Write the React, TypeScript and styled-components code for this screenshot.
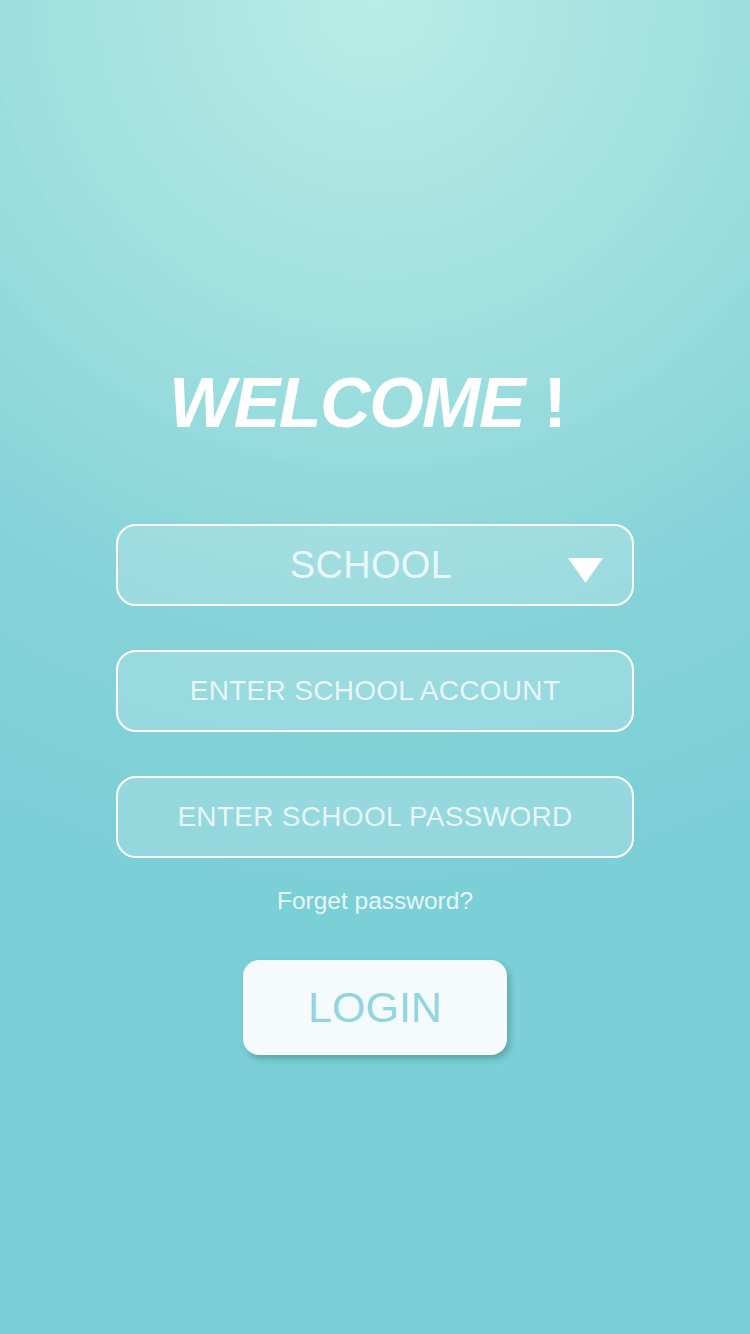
import React from 'react';
import styled, { createGlobalStyle } from 'styled-components';

const GlobalStyle = createGlobalStyle`
  html, body {
    margin: 0;
    padding: 0;
  }
  body {
    font-family: "Liberation Sans", Arial, sans-serif;
  }
`;

const Page = styled.div`
  min-height: 1334px;
  width: 750px;
  display: flex;
  flex-direction: column;
  align-items: center;
  background: radial-gradient(ellipse 900px 900px at 375px 0px, #b8ede6 0%, #9fdfdf 40%, #86d3d9 70%, #7bcfd6 100%);
  background-color: #7bcfd6;
`;

const Title = styled.h1`
  margin: 368px 0 0;
  height: 70px;
  font-size: 70px;
  line-height: 70px;
  font-weight: 700;
  color: #fff;
  padding-right: 14px;
  white-space: pre;
`;

const TitleWord = styled.span`
  font-style: italic;
  letter-spacing: -1.5px;
`;

const Bang = styled.span`
  font-style: normal;
`;

const Form = styled.div`
  margin-top: 86px;
  display: flex;
  flex-direction: column;
  gap: 44px;
`;

const Field = styled.div<{ $size: number; $padRight?: number }>`
  position: relative;
  box-sizing: border-box;
  width: 518px;
  height: 82px;
  border: 2px solid #fff;
  border-radius: 20px;
  background: rgba(255, 255, 255, 0.18);
  display: flex;
  align-items: center;
  justify-content: center;
  padding-right: ${(p) => p.$padRight ?? 0}px;
  font-size: ${(p) => p.$size}px;
  letter-spacing: 0.3px;
  color: rgba(255, 255, 255, 0.78);
`;

const Arrow = styled.svg`
  position: absolute;
  right: 29px;
  top: 32px;
`;

const Forget = styled.div`
  margin-top: 31px;
  font-size: 24.5px;
  line-height: 24px;
  color: rgba(255, 255, 255, 0.85);
`;

const LoginButton = styled.button`
  margin-top: 47px;
  width: 264px;
  height: 95px;
  border: none;
  border-radius: 16px;
  background: #f5fafd;
  box-shadow: 3px 4px 6px rgba(40, 90, 100, 0.35);
  font-family: "Liberation Sans", Arial, sans-serif;
  font-size: 43px;
  color: #91d5de;
  cursor: pointer;
`;

const App = () => {
  return (
    <>
      <GlobalStyle />
      <Page>
        <Title>
          <TitleWord>WELCOME</TitleWord>
          <Bang> !</Bang>
        </Title>
        <Form>
          <Field $size={38} $padRight={8}>
            SCHOOL
            <Arrow width="35" height="25" viewBox="0 0 35 25">
              <polygon points="0,0 35,0 17.5,25" fill="#fff" />
            </Arrow>
          </Field>
          <Field $size={28}>ENTER SCHOOL ACCOUNT</Field>
          <Field $size={28}>ENTER SCHOOL PASSWORD</Field>
        </Form>
        <Forget>Forget password?</Forget>
        <LoginButton>LOGIN</LoginButton>
      </Page>
    </>
  );
};

export default App;
